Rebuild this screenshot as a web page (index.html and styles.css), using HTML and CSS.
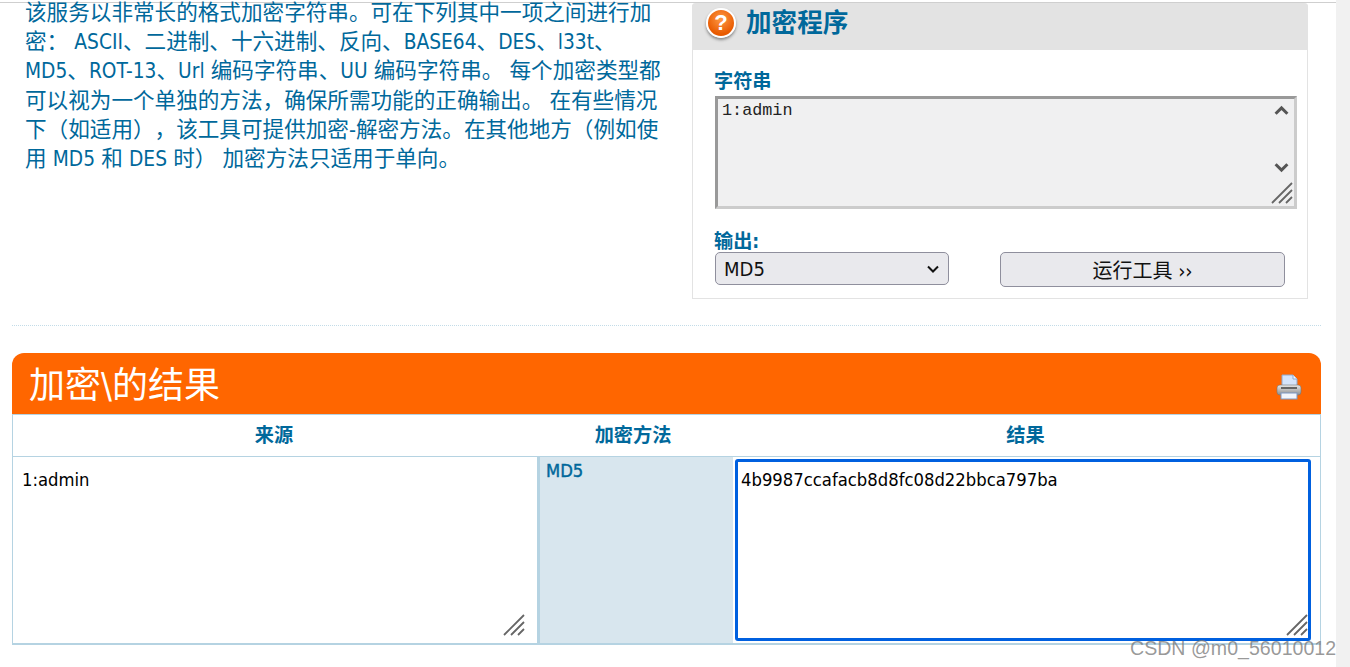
FILE: index.html
```html
<!DOCTYPE html>
<html lang="zh">
<head>
<meta charset="utf-8">
<title>加密程序</title>
<link rel="stylesheet" href="styles.css">
</head>
<body>
<div class="page">
  <main class="main">
    <div class="topline"></div>
    <section class="top">
      <p class="intro">该服务以非常长的格式加密字符串。可在下列其中一项之间进行加<br>密： <span class="lat">ASCII</span>、二进制、十六进制、反向、<span class="lat">BASE64</span>、<span class="lat">DES</span>、<span class="lat">l33t</span>、<br><span class="lat">MD5</span>、<span class="lat">ROT-13</span>、<span class="lat">Url</span> 编码字符串、<span class="lat">UU</span> 编码字符串。 每个加密类型都<br>可以视为一个单独的方法，确保所需功能的正确输出。 在有些情况<br>下（如适用），该工具可提供加密-解密方法。在其他地方（例如使<br>用 <span class="lat">MD5</span> 和 <span class="lat">DES</span> 时） 加密方法只适用于单向。</p>
      <div class="panel">
        <div class="panel-head">
          <span class="help-icon">?</span>
          <h2 class="panel-title">加密程序</h2>
        </div>
        <form class="panel-body">
          <label class="field-label">字符串</label>
          <div class="input-wrap">
            <textarea class="source-input" spellcheck="false">1:admin</textarea>
            <svg class="arrow arrow-up" viewBox="0 0 14 10"><path d="M1.5 8 7 2.5 12.5 8" fill="none" stroke="#555" stroke-width="2.8"/></svg>
            <svg class="arrow arrow-down" viewBox="0 0 14 10"><path d="M1.5 2 7 7.5 12.5 2" fill="none" stroke="#555" stroke-width="2.8"/></svg>
            <svg class="grip grip-source" viewBox="0 0 22 22"><path d="M1 21 21 1M8 21 21 8M15 21 21 15" stroke="#666" stroke-width="1.8" fill="none"/></svg>
          </div>
          <label class="field-label output-label">输出:</label>
          <div class="controls">
            <div class="select">
              <span>MD5</span>
              <svg class="select-chevron" viewBox="0 0 14 10"><path d="M2 2.5 7 7.5 12 2.5" fill="none" stroke="#111" stroke-width="2"/></svg>
            </div>
            <button class="run" type="button">运行工具 ››</button>
          </div>
        </form>
      </div>
    </section>
    <div class="divider"></div>
    <section class="results">
      <header class="results-bar">
        <h1 class="results-title">加密\的结果</h1>
        <svg class="printer" viewBox="0 0 26 26">
          <defs>
            <linearGradient id="pb" x1="0" y1="0" x2="0" y2="1"><stop offset="0" stop-color="#e8e8e8"/><stop offset="1" stop-color="#8d8d8d"/></linearGradient>
          </defs>
          <path d="M6 1h11l4 4v9H6z" fill="#d5e4fa" stroke="#8fa8cc"/>
          <path d="M17 1v4h4" fill="#f4f8ff" stroke="#8fa8cc"/>
          <rect x="1" y="11" width="24" height="10" rx="3" fill="url(#pb)" stroke="#777" stroke-width=".6"/>
          <rect x="5" y="19" width="16" height="6" fill="#f2f5fb" stroke="#7d98c4"/>
          <rect x="5" y="13" width="16" height="2" fill="#666"/>
        </svg>
      </header>
      <div class="table">
        <div class="table-head">
          <div>来源</div>
          <div>加密方法</div>
          <div>结果</div>
        </div>
        <div class="table-row">
          <div class="cell cell-source">
            <textarea class="plain-input" spellcheck="false">1:admin</textarea>
            <svg class="grip grip-cell" viewBox="0 0 22 22"><path d="M1 21 21 1M8 21 21 8M15 21 21 15" stroke="#666" stroke-width="1.8" fill="none"/></svg>
          </div>
          <div class="cell cell-method">MD5</div>
          <div class="cell cell-result">
            <textarea class="plain-input result-input" spellcheck="false">4b9987ccafacb8d8fc08d22bbca797ba</textarea>
            <svg class="grip grip-result" viewBox="0 0 22 22"><path d="M1 21 21 1M8 21 21 8M15 21 21 15" stroke="#666" stroke-width="1.8" fill="none"/></svg>
          </div>
        </div>
      </div>
    </section>
  </main>
  <div class="track"></div>
</div>
<div class="watermark">CSDN @m0_56010012</div>
</body>
</html>
```

FILE: styles.css
```css
* { box-sizing: border-box; }
html, body { margin: 0; padding: 0; height: 100%; overflow: hidden; background: #fff; }
body { font-family: "DejaVu Sans", "Noto Sans CJK SC", sans-serif; font-stretch: condensed; text-spacing-trim: space-all; color: #00689b; }
.page { display: flex; height: 667px; }
.main { width: 1336px; flex: none; overflow: hidden; }
.track { flex: 1; background: #f1f1f1; }
.topline { height: 3px; border-bottom: 1px solid #cfcfcf; margin-top: 0; }

.top { display: flex; height: 296px; }
.intro { width: 692px; flex: none; margin: -5px 0 0; padding-left: 25px; font-size: 21.6px; line-height: 29.2px; white-space: nowrap; color: #00689b; }
.lat { font-size: .96em; line-height: 1; }
.panel { width: 616px; flex: none; border: 1px solid #e3e3e3; border-top: 0; border-radius: 4px 4px 0 0; display: flex; flex-direction: column; }
.panel-head { height: 47px; background: #e3e3e3; display: flex; align-items: center; padding: 0 0 7px 14px; gap: 10px; margin: 0 -1px; border-radius: 4px 4px 0 0; }
.help-icon { width: 30px; height: 30px; border-radius: 50%; background: radial-gradient(circle at 50% 35%, #ff9a45, #e85a00 70%); border: 2px solid #fff; box-shadow: 0 2px 3px #888; color: #fff; font: bold 22px/26px "Liberation Sans", sans-serif; text-align: center; flex: none; }
.panel-title { margin: 0; font-size: 25.6px; font-weight: bold; line-height: 30px; color: #00689b; }
.panel-body { padding: 20px 10px 0 22px; display: flex; flex-direction: column; }
.field-label { font-size: 19.2px; font-weight: bold; line-height: 24px; height: 26px; color: #00689b; margin-left: -1px; }
.input-wrap { position: relative; height: 113px; width: 582px; }
.source-input { display: block; width: 100%; height: 100%; resize: none; overflow: hidden; border: 3px solid; border-color: #999 #ccc #ccc #999; background: #f0f0f1; padding: 2px 4px; margin: 0; font: 16.8px/20px "Liberation Mono", monospace; color: #222; outline: 0; }
.arrow { position: absolute; width: 15px; height: 11px; right: 8px; }
.arrow-up { top: 9px; }
.arrow-down { top: 66px; }
.grip { position: absolute; width: 22px; height: 22px; }
.grip-source { right: 4px; bottom: 5px; }
.output-label { margin-top: 21px; height: 22px; }
.controls { display: flex; align-items: flex-start; }
.select { width: 234px; height: 33px; background: #e9e9ed; border: 1px solid #8f8f9d; border-radius: 5px; display: flex; align-items: center; justify-content: space-between; padding: 0 8px 0 8px; font-size: 20px; color: #111; }
.select-chevron { width: 14px; height: 10px; }
.run { width: 285px; height: 35px; margin-left: 51px; background: #e9e9ed; border: 1px solid #8f8f9d; border-radius: 5px; font-family: inherit; font-stretch: inherit; font-size: 20px; color: #111; padding: 0; }

.divider { height: 0; margin: 26px 15px 0 12px; border-top: 1px dotted #c3dce8; }
.results { margin: 27px 15px 0 12px; }
.results-bar { height: 61px; background: #f60; border-radius: 12px 12px 0 0; display: flex; align-items: center; justify-content: space-between; padding: 4px 19px 0 17px; }
.results-title { margin: 0; color: #fff; font-size: 36px; font-weight: normal; line-height: 46px; }
.printer { width: 26px; height: 26px; margin-top: 2px; }
.table { border: 1px solid #b5d3e2; border-bottom: 2px solid #b5d3e2; border-top: 1px solid #b5d3e2; height: 231px; display: flex; flex-direction: column; }
.table-head { height: 42px; flex: none; border-bottom: 1px solid #b5d3e2; display: grid; grid-template-columns: 522px 196px 1fr; align-items: center; text-align: center; font-size: 19.2px; font-weight: bold; padding-bottom: 3px; }
.table-row { flex: 1; display: grid; grid-template-columns: 524px 196px 1fr; min-height: 0; }
.cell { position: relative; min-height: 0; }
.plain-input { display: block; width: 100%; height: 100%; resize: none; overflow: hidden; border: 0; padding: 12px 9px; margin: 0; font-family: inherit; font-stretch: inherit; font-size: 18.3px; line-height: 21px; color: #000; background: transparent; outline: 0; }
.cell-method { background: #d8e6ee; border-left: 3px solid #b5d3e2; padding: 2px 6px; font-size: 18.3px; line-height: 24px; -webkit-text-stroke: .4px #00689b; color: #00689b; }
.cell-result { padding: 2px 9px 2px 2px; }
.result-input { border: 3px solid #0060df; border-radius: 3px; padding: 7px 3px; background: #fff; }
.grip-cell { right: 12px; bottom: 7px; }
.grip-result { right: 12px; bottom: 7px; }
.watermark { position: absolute; left: 1130px; top: 637px; font: 19.6px/22px "Liberation Sans", sans-serif; color: rgba(120, 120, 120, .75); white-space: nowrap; }
```
